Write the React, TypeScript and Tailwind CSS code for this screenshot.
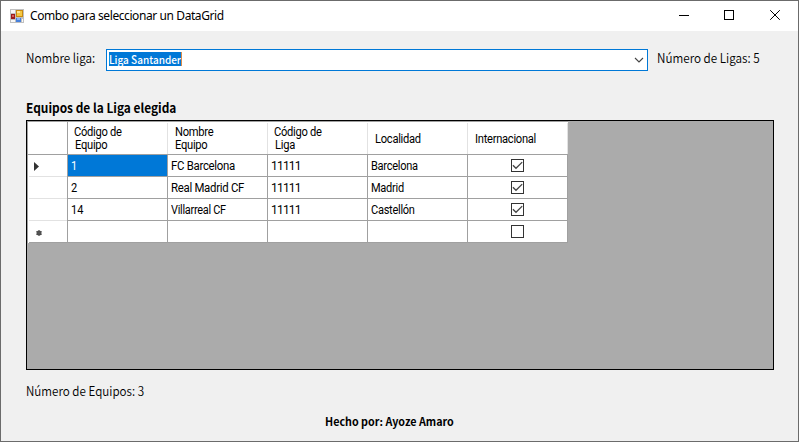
import React from "react";

type Row = { code: string; name: string; league: string; city: string };

const rows: Row[] = [
  { code: "1", name: "FC Barcelona", league: "11111", city: "Barcelona" },
  { code: "2", name: "Real Madrid CF", league: "11111", city: "Madrid" },
  { code: "14", name: "Villarreal CF", league: "11111", city: "Castellón" },
];

const labelFont = "font-['Noto_Sans_CJK_SC',sans-serif] whitespace-nowrap";

function AppIcon() {
  return (
    <svg width="14" height="14" viewBox="0 0 14 14" shapeRendering="crispEdges">
      <rect width="14" height="14" fill="#c0c0c0" />
      <rect x="1" y="1" width="4" height="3" fill="#f8f8f8" />
      <rect x="1" y="11" width="4" height="2" fill="#f8f8f8" />
      <rect x="12" y="10" width="1" height="3" fill="#f8f8f8" />
      <rect x="1" y="5" width="4" height="5" fill="#9c1c1c" />
      <rect x="2" y="6" width="2" height="2" fill="#d8605a" />
      <rect x="6" y="1" width="7" height="7" fill="#c98a10" />
      <rect x="7" y="2" width="5" height="5" fill="#f5c842" />
      <rect x="7" y="2" width="3" height="2" fill="#fde695" />
      <rect x="6" y="9" width="5" height="4" fill="#4680dc" />
      <rect x="7" y="9" width="3" height="2" fill="#8cb4f2" />
    </svg>
  );
}

function CheckBox({ checked }: { checked: boolean }) {
  return (
    <svg width="13" height="13" viewBox="0 0 13 13" className="mr-px">
      <rect x="0.5" y="0.5" width="12" height="12" fill="#fff" stroke="#333" />
      {checked && <path d="M1.9 6.2L5 9.3L11.2 3.1" fill="none" stroke="#444" strokeWidth="1.3" />}
    </svg>
  );
}

function HeaderCell({ lines }: { lines: string[] }) {
  return (
    <div className="flex w-[100px] border-b border-b-[#a0a0a0] bg-white">
      <div className={`mt-px flex flex-1 flex-col items-start justify-center border-r border-r-[#e2e2e2] pt-px leading-[13px] ${lines[0].startsWith("C") ? "pl-[6px]" : "pl-[7px]"}`}>
        {lines.map((l, i) => (
          <span key={l} className={`origin-left scale-x-[0.93] tracking-[-0.3px] ${i && lines[0].startsWith("C") ? "ml-px" : ""}`}>{l}</span>
        ))}
      </div>
    </div>
  );
}

function Cell({ text, selected = false, fit = "" }: { text?: string; selected?: boolean; fit?: string }) {
  return (
    <div className={`flex w-[100px] items-center border-r border-b border-[#a0a0a0] pl-[3px] ${selected ? "bg-[#0078d7] text-white" : "bg-white"}`}>
      {text && <span className={`origin-left ${fit}`}>{text}</span>}
    </div>
  );
}

function RowHeader({ children, last = false }: { children?: React.ReactNode; last?: boolean }) {
  return (
    <div className="flex w-[40px] border-r border-[#a0a0a0] bg-white">
      <div className={`ml-px flex flex-1 items-center border-b ${last ? "border-[#a0a0a0]" : "border-[#e2e2e2]"}`}>{children}</div>
    </div>
  );
}

export default function App() {
  return (
    <div className="flex h-[442px] w-[799px] flex-col overflow-hidden border border-[#6b6b6b] bg-[#f0f0f0] text-black">
      <header className="flex h-[30px] shrink-0 items-center bg-white pl-[9px]">
        <AppIcon />
        <span className="ml-[6px] flex-1 font-['Noto_Sans',sans-serif] text-[12px] tracking-[-0.41px] whitespace-nowrap">Combo para seleccionar un DataGrid</span>
        <svg width="141" height="30" viewBox="657 0 141 30" fill="none" stroke="#000">
          <path d="M679 14.5H689" />
          <rect x="724.5" y="9.5" width="9" height="9" />
          <path d="M770.2 9.2L779.8 18.8M779.8 9.2L770.2 18.8" />
        </svg>
      </header>

      <main className="flex flex-1 flex-col pl-[25px]">
        <div className="mt-[18px] flex h-[22px] items-center">
          <span className={`${labelFont} -mt-1 w-[80px] origin-left scale-x-[0.9] text-[13px] leading-[22px] font-[350]`}>Nombre liga:</span>
          <div className="flex h-[22px] w-[542px] items-center border border-[#0078d7] bg-white pl-0.5">
            <span className={`${labelFont} -mt-0.5 flex h-[14px] w-[73px] items-center border-r border-[#d88a4a] bg-[#0078d7] text-[11px] leading-[14px] font-medium text-white`}>
              <span className="origin-left scale-x-[0.91]">Liga Santander</span>
            </span>
            <svg className="mr-[3px] ml-auto" width="10" height="6" viewBox="0 0 10 6" fill="none" stroke="#444" strokeWidth="1.1">
              <path d="M1 1L5 5L9 1" />
            </svg>
          </div>
          <span className={`${labelFont} -mt-1 ml-[9px] origin-left scale-x-[0.9] text-[13px] leading-[22px] font-[350]`}>Número de Ligas: 5</span>
        </div>

        <h1 className={`${labelFont} mt-[26px] h-[23px] origin-left scale-x-[0.915] text-[13px] leading-[22px] font-bold`}>Equipos de la Liga elegida</h1>

        <section className="h-[250px] w-[748px] shrink-0 border border-black bg-[#ababab] font-['Roboto',sans-serif] text-[12px] whitespace-nowrap">
          <div className="w-[541px] border-t border-l border-[#a0a0a0]">
            <div className="flex h-[33px]">
              <div className="w-[40px] border-r border-b border-[#a0a0a0] bg-white" />
              <HeaderCell lines={["Código de", "Equipo"]} />
              <HeaderCell lines={["Nombre", "Equipo"]} />
              <HeaderCell lines={["Código de", "Liga"]} />
              <HeaderCell lines={["Localidad"]} />
              <HeaderCell lines={["Internacional"]} />
            </div>
            {rows.map((r, i) => (
              <div className="flex h-[22px]" key={r.code}>
                <RowHeader>
                  {i === 0 && (
                    <svg className="mt-px ml-[5px]" width="5" height="9" viewBox="0 0 5 9" fill="#333"><path d="M0 0L5 4.5L0 9Z" /></svg>
                  )}
                </RowHeader>
                <Cell text={r.code} selected={i === 0} fit="scale-x-[0.92]" />
                <Cell text={r.name} fit={i === 2 ? "scale-x-[0.91] tracking-[-0.3px]" : "scale-x-[0.95] tracking-[-0.3px]"} />
                <Cell text={r.league} fit="tracking-[-0.8px]" />
                <Cell text={r.city} fit="scale-x-[0.92] tracking-[-0.3px]" />
                <div className="flex w-[100px] items-center justify-center border-r border-b border-[#a0a0a0] bg-white"><CheckBox checked /></div>
              </div>
            ))}
            <div className="flex h-[22px]">
              <RowHeader last>
                <svg className="mt-[2px] ml-[7px]" width="6" height="6" viewBox="0 0 6 6" stroke="#555" fill="#444"><circle cx="3" cy="3" r="2.5" stroke="none" /><path d="M3 0V6M.3 1.5L5.7 4.5M5.7 1.5L.3 4.5" /></svg>
              </RowHeader>
              <Cell /><Cell /><Cell /><Cell />
              <div className="flex w-[100px] items-center justify-center border-r border-b border-[#a0a0a0] bg-white"><CheckBox checked={false} /></div>
            </div>
          </div>
        </section>

        <p className={`${labelFont} mt-[10px] origin-left scale-x-[0.895] self-start text-[13px] leading-[22px] font-[350]`}>Número de Equipos: 3</p>
        <p className={`${labelFont} mt-[9px] ml-[299px] origin-left scale-x-[0.977] self-start text-[11px] leading-[20px] font-bold`}>Hecho por: Ayoze Amaro</p>
      </main>
    </div>
  );
}
